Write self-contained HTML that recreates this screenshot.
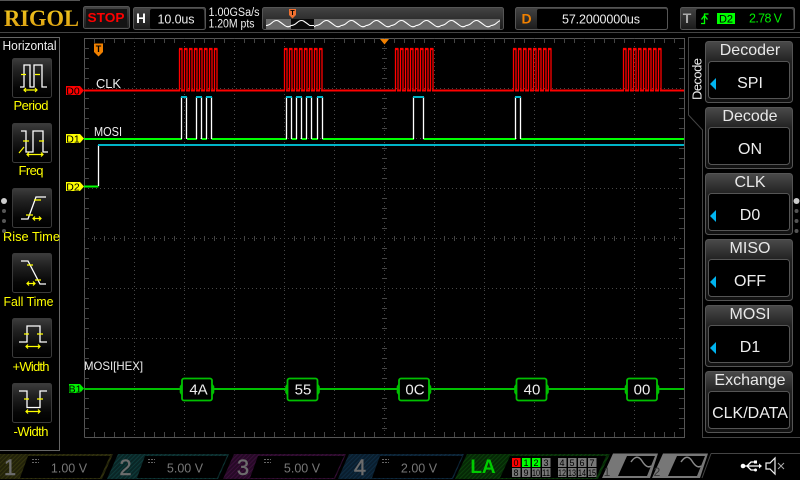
<!DOCTYPE html>
<html><head><meta charset="utf-8"><style>
html,body{margin:0;padding:0;background:#000;width:800px;height:480px;overflow:hidden}
svg{display:block}
text{font-family:"Liberation Sans",sans-serif;fill:#eee}
.l{font-size:13px;fill:#ff0;text-anchor:middle}
.m{font-size:16px;text-anchor:middle;fill:#e8e8e8}
.s{font-size:16px;text-anchor:middle;fill:#eee}
.v{font-size:12.5px;fill:#777;text-anchor:middle}
.n{font-size:22px;fill:#6c6c6c;text-anchor:middle;stroke:#6c6c6c;stroke-width:.4px}
.d{font-size:9px;fill:#000;text-anchor:middle}
.w{fill:none;stroke:#fff;stroke-width:1.3}
.y{fill:none;stroke:#ff0;stroke-width:1.2}
.hx{font-size:15px;text-anchor:middle}
.tg{font-size:10.5px;fill:#000;text-anchor:middle}
</style></head><body>
<svg width="800" height="480" viewBox="0 0 800 480" xmlns="http://www.w3.org/2000/svg">
<defs>
<linearGradient id="b" x1="0" y1="0" x2="0" y2="1"><stop offset="0" stop-color="#3c3c3c"/><stop offset=".3" stop-color="#222"/><stop offset=".75" stop-color="#060606"/><stop offset="1" stop-color="#000"/></linearGradient>
<linearGradient id="mh" x1="0" y1="0" x2="0" y2="1"><stop offset="0" stop-color="#4a4a4a"/><stop offset=".33" stop-color="#222"/><stop offset="1" stop-color="#111"/></linearGradient>
<linearGradient id="hb" x1="0" y1="0" x2="0" y2="1"><stop offset="0" stop-color="#444"/><stop offset="1" stop-color="#1a1a1a"/></linearGradient>
<linearGradient id="gd" x1="0" y1="0" x2="0" y2="1"><stop offset="0" stop-color="#f4cc20"/><stop offset="1" stop-color="#d89a10"/></linearGradient>
<pattern id="h1" width="3" height="3" patternUnits="userSpaceOnUse" patternTransform="rotate(45)"><rect width="3" height="3" fill="#22220a"/><rect width="1" height="3" fill="#34340e"/></pattern>
<pattern id="h2" width="3" height="3" patternUnits="userSpaceOnUse" patternTransform="rotate(45)"><rect width="3" height="3" fill="#0a2626"/><rect width="1" height="3" fill="#0e3a3a"/></pattern>
<pattern id="h3" width="3" height="3" patternUnits="userSpaceOnUse" patternTransform="rotate(45)"><rect width="3" height="3" fill="#260a26"/><rect width="1" height="3" fill="#3a0e3a"/></pattern>
<pattern id="h4" width="3" height="3" patternUnits="userSpaceOnUse" patternTransform="rotate(45)"><rect width="3" height="3" fill="#0a1e2e"/><rect width="1" height="3" fill="#0e2c42"/></pattern>
<pattern id="h5" width="3" height="3" patternUnits="userSpaceOnUse" patternTransform="rotate(45)"><rect width="3" height="3" fill="#062806"/><rect width="1" height="3" fill="#0b400b"/></pattern>
<pattern id="sw" x="266" y="19" width="25" height="10" patternUnits="userSpaceOnUse"><path d="M0 6.500Q3 6.500 6.250 3.500T12.500 2Q15.500 4 18.750 6.500T25 6.500" fill="none" stroke="#fff" stroke-width="1.100"/></pattern>
<g id="burst" fill="none" stroke="#f00" stroke-width="1.300"><path d="M.5 42V.5H3V42M5.500 42V.5H8V42M10.500 42V.5H13V42M15.500 42V.5H18V42M20.500 42V.5H23V42M25.500 42V.5H28V42M30.500 42V.5H33V42M35.500 42V.5H38V42"/><path d="M0 -.5H3.500M5 -.5H8.500M10 -.5H13.500M15 -.5H18.500M20 -.5H23.500M25 -.5H28.500M30 -.5H33.500M35 -.5H38.500"/></g>
<g id="hexb"><rect x="2" y="-11" width="30" height="22" rx="2" fill="#000" stroke="#00c000" stroke-width="1.800"/><path d="M2 -6L0 -3V3L2 6ZM32 -6L34 -3V3L32 6Z" fill="#00c000" stroke="#00c000" stroke-width=".6"/></g>
</defs>
<rect width="800" height="480" fill="#000"/>
<path d="M0 0.500H80" stroke="#555"/>
<!-- header -->
<text x="4" y="26" style="font-family:'Liberation Serif',serif;font-weight:bold;font-size:23px;fill:url(#gd)" textLength="75" lengthAdjust="spacingAndGlyphs">RIGOL</text>
<rect x="83.500" y="6.500" width="46" height="22" rx="2" fill="url(#hb)" stroke="#555"/>
<rect x="86" y="9" width="41" height="18" fill="#141414"/>
<text x="106" y="22" style="font-size:13px;font-weight:bold;fill:#f00;text-anchor:middle" textLength="37" lengthAdjust="spacingAndGlyphs">STOP</text>
<rect x="133.500" y="7.500" width="72" height="22" rx="2" fill="url(#hb)" stroke="#555"/>
<rect x="150" y="9" width="54" height="20" rx="2" fill="#000"/>
<text x="141" y="23" style="font-size:13.500px;font-weight:bold;text-anchor:middle;fill:#fff">H</text>
<text x="176" y="23.500" style="font-size:12.500px;text-anchor:middle" textLength="37" lengthAdjust="spacing">10.0us</text>
<text x="208.500" y="16" style="font-size:11.500px" textLength="51" lengthAdjust="spacingAndGlyphs">1.00GSa/s</text>
<text x="208.500" y="27.500" style="font-size:11.500px" textLength="46" lengthAdjust="spacingAndGlyphs">1.20M pts</text>
<rect x="262.500" y="7.500" width="241" height="22" rx="2" fill="url(#hb)" stroke="#555"/>
<rect x="266" y="19" width="234" height="10" fill="#6a6a6a"/>
<rect x="266" y="19" width="234" height="10" fill="url(#sw)"/>
<rect x="291" y="19" width="23" height="10" fill="#0a0a0a"/>
<path d="M291 25.500Q294 25.500 297.250 22.500T303.500 21Q306.500 23 309.750 25.500L314 25.500" fill="none" stroke="#fff" stroke-width="1.100"/>
<path d="M289 9H296V15L292.500 18.500L289 15Z" fill="#f07030"/>
<text x="292.500" y="15" style="font-size:7px;font-weight:bold;text-anchor:middle;fill:#000">T</text>
<rect x="515.500" y="7.500" width="152" height="22" rx="2" fill="url(#hb)" stroke="#555"/>
<rect x="537" y="9" width="130" height="20" rx="2" fill="#000"/>
<text x="526.500" y="23.500" style="font-size:14px;font-weight:bold;fill:#f08000;text-anchor:middle">D</text>
<text x="601" y="23.500" style="font-size:12.500px;text-anchor:middle" textLength="78" lengthAdjust="spacing">57.2000000us</text>
<rect x="680.500" y="7.500" width="114" height="22" rx="2" fill="url(#hb)" stroke="#555"/>
<rect x="696" y="9" width="97" height="20" rx="2" fill="#000"/>
<text x="687" y="23" style="font-size:14px;font-weight:bold;fill:#aaa;text-anchor:middle">T</text>
<path d="M701 23.500H704.500V14H708.500M701.500 19.500L704.500 15.500L707.500 19.500" fill="none" stroke="#0f0" stroke-width="1.300"/>
<rect x="717" y="13" width="18" height="11" fill="#0f0"/>
<text x="726" y="22.500" style="font-size:11px;fill:#000;text-anchor:middle">D2</text>
<text x="749" y="22.700" style="font-size:12.500px;fill:#0e0" textLength="33" lengthAdjust="spacing">2.78 V</text>
<path d="M0 32.500H800" stroke="#444"/>

<!-- grid -->
<path d="M84.500 437.500V38.500H684.500V437.500H84.500" fill="none" stroke="#555"/>
<g stroke="#484848" stroke-dasharray="1 3" fill="none">
<path d="M134.500 38V437M184.500 38V437M234.500 38V437M284.500 38V437M334.500 38V437M434.500 38V437M484.500 38V437M534.500 38V437M584.500 38V437M634.500 38V437"/>
<path d="M84 88.500H684M84 138.500H684M84 188.500H684M84 288.500H684M84 338.500H684M84 388.500H684"/>
</g>
<g stroke="#444" fill="none">
<path d="M84 238.500H684"  stroke-dasharray="1 3"/>
<path d="M384.500 38V437" stroke-dasharray="1 3"/>
<path d="M94.500 38v5M104.500 38v5M114.500 38v5M124.500 38v5M144.500 38v5M154.500 38v5M164.500 38v5M174.500 38v5M194.500 38v5M204.500 38v5M214.500 38v5M224.500 38v5M244.500 38v5M254.500 38v5M264.500 38v5M274.500 38v5M294.500 38v5M304.500 38v5M314.500 38v5M324.500 38v5M344.500 38v5M354.500 38v5M364.500 38v5M374.500 38v5M394.500 38v5M404.500 38v5M414.500 38v5M424.500 38v5M444.500 38v5M454.500 38v5M464.500 38v5M474.500 38v5M494.500 38v5M504.500 38v5M514.500 38v5M524.500 38v5M544.500 38v5M554.500 38v5M564.500 38v5M574.500 38v5M594.500 38v5M604.500 38v5M614.500 38v5M624.500 38v5M644.500 38v5M654.500 38v5M664.500 38v5M674.500 38v5"/>
<path d="M94.500 437v-5M104.500 437v-5M114.500 437v-5M124.500 437v-5M144.500 437v-5M154.500 437v-5M164.500 437v-5M174.500 437v-5M194.500 437v-5M204.500 437v-5M214.500 437v-5M224.500 437v-5M244.500 437v-5M254.500 437v-5M264.500 437v-5M274.500 437v-5M294.500 437v-5M304.500 437v-5M314.500 437v-5M324.500 437v-5M344.500 437v-5M354.500 437v-5M364.500 437v-5M374.500 437v-5M394.500 437v-5M404.500 437v-5M414.500 437v-5M424.500 437v-5M444.500 437v-5M454.500 437v-5M464.500 437v-5M474.500 437v-5M494.500 437v-5M504.500 437v-5M514.500 437v-5M524.500 437v-5M544.500 437v-5M554.500 437v-5M564.500 437v-5M574.500 437v-5M594.500 437v-5M604.500 437v-5M614.500 437v-5M624.500 437v-5M644.500 437v-5M654.500 437v-5M664.500 437v-5M674.500 437v-5"/>
<path d="M84 48.500h5M84 58.500h5M84 68.500h5M84 78.500h5M84 98.500h5M84 108.500h5M84 118.500h5M84 128.500h5M84 148.500h5M84 158.500h5M84 168.500h5M84 178.500h5M84 198.500h5M84 208.500h5M84 218.500h5M84 228.500h5M84 248.500h5M84 258.500h5M84 268.500h5M84 278.500h5M84 298.500h5M84 308.500h5M84 318.500h5M84 328.500h5M84 348.500h5M84 358.500h5M84 368.500h5M84 378.500h5M84 398.500h5M84 408.500h5M84 418.500h5M84 428.500h5"/>
<path d="M684 48.500h-5M684 58.500h-5M684 68.500h-5M684 78.500h-5M684 98.500h-5M684 108.500h-5M684 118.500h-5M684 128.500h-5M684 148.500h-5M684 158.500h-5M684 168.500h-5M684 178.500h-5M684 198.500h-5M684 208.500h-5M684 218.500h-5M684 228.500h-5M684 248.500h-5M684 258.500h-5M684 268.500h-5M684 278.500h-5M684 298.500h-5M684 308.500h-5M684 318.500h-5M684 328.500h-5M684 348.500h-5M684 358.500h-5M684 368.500h-5M684 378.500h-5M684 398.500h-5M684 408.500h-5M684 418.500h-5M684 428.500h-5"/>
<path d="M382 48.500h5M382 58.500h5M382 68.500h5M382 78.500h5M382 98.500h5M382 108.500h5M382 118.500h5M382 128.500h5M382 148.500h5M382 158.500h5M382 168.500h5M382 178.500h5M382 198.500h5M382 208.500h5M382 218.500h5M382 228.500h5M382 248.500h5M382 258.500h5M382 268.500h5M382 278.500h5M382 298.500h5M382 308.500h5M382 318.500h5M382 328.500h5M382 348.500h5M382 358.500h5M382 368.500h5M382 378.500h5M382 398.500h5M382 408.500h5M382 418.500h5M382 428.500h5"/>
<path d="M94.500 236v5M104.500 236v5M114.500 236v5M124.500 236v5M144.500 236v5M154.500 236v5M164.500 236v5M174.500 236v5M194.500 236v5M204.500 236v5M214.500 236v5M224.500 236v5M244.500 236v5M254.500 236v5M264.500 236v5M274.500 236v5M294.500 236v5M304.500 236v5M314.500 236v5M324.500 236v5M344.500 236v5M354.500 236v5M364.500 236v5M374.500 236v5M394.500 236v5M404.500 236v5M414.500 236v5M424.500 236v5M444.500 236v5M454.500 236v5M464.500 236v5M474.500 236v5M494.500 236v5M504.500 236v5M514.500 236v5M524.500 236v5M544.500 236v5M554.500 236v5M564.500 236v5M574.500 236v5M594.500 236v5M604.500 236v5M614.500 236v5M624.500 236v5M644.500 236v5M654.500 236v5M664.500 236v5M674.500 236v5"/>
</g>
<path d="M380 39H389L384.500 44.500Z" fill="#f08000"/>
<path d="M94 43.500H103V52L98.500 56.500L94 52Z" fill="#f08000"/>
<text x="98.500" y="52" style="font-size:9px;font-weight:bold;text-anchor:middle;fill:#000">T</text>

<!-- CLK -->
<g transform="translate(0,49)">
<use href="#burst" x="179"/><use href="#burst" x="284"/><use href="#burst" x="395"/><use href="#burst" x="513"/><use href="#burst" x="623"/>
</g>
<path d="M84 90.500H180M181 90.500H185M186 90.500H190M191 90.500H195M196 90.500H200M201 90.500H205M206 90.500H210M211 90.500H215M216 90.500H285M286 90.500H290M291 90.500H295M296 90.500H300M301 90.500H305M306 90.500H310M311 90.500H315M316 90.500H320M321 90.500H396M397 90.500H401M402 90.500H406M407 90.500H411M412 90.500H416M417 90.500H421M422 90.500H426M427 90.500H431M432 90.500H514M515 90.500H519M520 90.500H524M525 90.500H529M530 90.500H534M535 90.500H539M540 90.500H544M545 90.500H549M550 90.500H624M625 90.500H629M630 90.500H634M635 90.500H639M640 90.500H644M645 90.500H649M650 90.500H654M655 90.500H659M660 90.500H684" stroke="#f00" stroke-width="2" fill="none"/>

<!-- MOSI -->
<path d="M84 139H182M187 139H197M201.500 139H207M211.500 139H287M291.500 139H297M301.500 139H307M311.500 139H318M322.500 139H414M423.500 139H516M520.500 139H684" stroke="#0f0" stroke-width="2" fill="none"/>
<path d="M181.500 139V97M186.500 97V139M196.500 139V97M201.500 97V139M206.500 139V97M211.500 97V139M286.500 139V97M291.500 97V139M296.500 139V97M301.500 97V139M306.500 139V97M311.500 97V139M317.500 139V97M322.500 97V139M413.500 139V97M423.500 97V139M515.500 139V97M520.500 97V139" stroke="#fff" stroke-width="1.300" fill="none"/>
<path d="M181 97H187M196 97H202M206 97H212M286 97H292M296 97H302M306 97H312M317 97H323M413 97H424M515 97H521" stroke="#00b4c8" stroke-width="2" fill="none"/>
<!-- D2 -->
<path d="M84 186.500H98.500" stroke="#0f0" stroke-width="2"/>
<path d="M98.500 186V145" stroke="#fff" stroke-width="1.300"/>
<path d="M98 145H684" stroke="#00b4c8" stroke-width="2"/>

<text x="96" y="88" style="font-size:12.500px" textLength="25" lengthAdjust="spacingAndGlyphs">CLK</text>
<text x="94" y="136" style="font-size:12.500px" textLength="28" lengthAdjust="spacingAndGlyphs">MOSI</text>
<text x="84" y="370" style="font-size:12px" textLength="59" lengthAdjust="spacingAndGlyphs">MOSI[HEX]</text>

<!-- tags -->
<path d="M66 86H80L84 90.500L80 95H66Z" fill="#f00"/><text class="tg" x="73" y="94.500">D0</text>
<path d="M66 134H80L84 138.500L80 143H66Z" fill="#ff0"/><text class="tg" x="73" y="142.500">D1</text>
<path d="M66 182H80L84 186.500L80 191H66Z" fill="#ff0"/><text class="tg" x="73" y="190.500">D2</text>
<path d="M69 384H80L84 388.500L80 393H69Z" fill="#0e0"/><text class="tg" x="75" y="392.500">B1</text>

<!-- bus -->
<path d="M84 389H684" stroke="#00c000" stroke-width="2"/>
<use href="#hexb" x="180" y="389.500"/><text class="hx" x="198.500" y="394.500">4A</text>
<use href="#hexb" x="285.500" y="389.500"/><text class="hx" x="303" y="394.500">55</text>
<use href="#hexb" x="397" y="389.500"/><text class="hx" x="415" y="394.500">0C</text>
<use href="#hexb" x="514.500" y="389.500"/><text class="hx" x="532" y="394.500">40</text>
<use href="#hexb" x="625" y="389.500"/><text class="hx" x="642" y="394.500">00</text>

<!-- left panel -->
<path d="M0 37.500H59.500V450.500H0" fill="none" stroke="#666"/>
<text x="29.500" y="50" style="font-size:12.500px;text-anchor:middle" textLength="54" lengthAdjust="spacingAndGlyphs">Horizontal</text>
<g fill="url(#b)" stroke="#3a3a3a">
<rect x="12.500" y="58.500" width="39" height="39" rx="2"/>
<rect x="12.500" y="123.500" width="39" height="39" rx="2"/>
<rect x="12.500" y="188.500" width="39" height="39" rx="2"/>
<rect x="12.500" y="253.500" width="39" height="39" rx="2"/>
<rect x="12.500" y="318.500" width="39" height="39" rx="2"/>
<rect x="12.500" y="383.500" width="39" height="39" rx="2"/>
</g>
<path class="w" d="M20 87H24V65H30V87H34V65H42V87H47"/>
<path class="y" d="M21 74.500H26M35 74.500H40M24 90H37M26 88L24 90L26 92M35 88L37 90L35 92"/>
<path class="w" d="M21 131H26V152H33V131H43V152H48"/>
<path class="y" d="M23 141H29M39 141H44M27 154.500H43M29 152.500L27 154.500L29 156.500M41 152.500L43 154.500L41 156.500M19 153L24 147"/>
<path class="w" d="M21 219H28L36 197H46"/>
<path class="y" d="M26 215H33M34 200H41M33 218.500H41M35 216.500L33 218.500L35 220.500M39 216.500L41 218.500L39 220.500"/>
<path class="w" d="M21 261H28L40 284H46"/>
<path class="y" d="M27 265H33M35 280H41M27 283.500H35M29 281.500L27 283.500L29 285.500M33 281.500L35 283.500L33 285.500"/>
<path class="w" d="M19 342H27V326H40V342H47"/>
<path class="y" d="M24 334H29M37 334H43M26 346.500H40M28 344.500L26 346.500L28 348.500M38 344.500L40 346.500L38 348.500"/>
<path class="w" d="M19 391H27V407.500H40V391H47"/>
<path class="y" d="M24 399H29M37 399H43M26 411.500H40M28 409.500L26 411.500L28 413.500M38 409.500L40 411.500L38 413.500"/>
<text class="l" x="31" y="110" textLength="35" lengthAdjust="spacing">Period</text>
<text class="l" x="31" y="175" textLength="25" lengthAdjust="spacing">Freq</text>
<text class="l" x="31.500" y="241" textLength="57" lengthAdjust="spacingAndGlyphs">Rise Time</text>
<text class="l" x="28.500" y="306" textLength="50" lengthAdjust="spacingAndGlyphs">Fall Time</text>
<text class="l" x="31" y="371" textLength="37" lengthAdjust="spacing">+Width</text>
<text class="l" x="31" y="436" textLength="35" lengthAdjust="spacing">-Width</text>
<circle cx="4" cy="201" r="3" fill="#ccc"/><circle cx="4" cy="211" r="2" fill="#555"/><circle cx="4" cy="221" r="2" fill="#555"/><circle cx="4" cy="231" r="2" fill="#555"/>

<!-- right panel -->
<path d="M800 37.500H688.500V115L702.500 130V437.500H800" fill="none" stroke="#444"/>
<text transform="translate(701.500,79) rotate(-90)" style="font-size:13px;text-anchor:middle" textLength="42" lengthAdjust="spacing">Decode</text>
<g stroke="#555" fill="#000">
<rect x="705.500" y="41.500" width="87" height="61" rx="3" fill="url(#mh)"/><rect x="708.500" y="61.500" width="81" height="37" rx="3"/>
<rect x="705.500" y="107.500" width="87" height="61" rx="3" fill="url(#mh)"/><rect x="708.500" y="127.500" width="81" height="37" rx="3"/>
<rect x="705.500" y="173.500" width="87" height="61" rx="3" fill="url(#mh)"/><rect x="708.500" y="193.500" width="81" height="37" rx="3"/>
<rect x="705.500" y="239.500" width="87" height="61" rx="3" fill="url(#mh)"/><rect x="708.500" y="259.500" width="81" height="37" rx="3"/>
<rect x="705.500" y="305.500" width="87" height="61" rx="3" fill="url(#mh)"/><rect x="708.500" y="325.500" width="81" height="37" rx="3"/>
<rect x="705.500" y="371.500" width="87" height="61" rx="3" fill="url(#mh)"/><rect x="708.500" y="391.500" width="81" height="37" rx="3"/>
</g>
<text class="m" x="750" y="55">Decoder</text><text class="s" x="750" y="88">SPI</text>
<text class="m" x="750" y="121">Decode</text><text class="s" x="750" y="154">ON</text>
<text class="m" x="750" y="187">CLK</text><text class="s" x="750" y="220">D0</text>
<text class="m" x="750" y="253">MISO</text><text class="s" x="750" y="286">OFF</text>
<text class="m" x="750" y="319">MOSI</text><text class="s" x="750" y="352">D1</text>
<text class="m" x="750" y="385">Exchange</text><text class="s" x="750" y="418">CLK/DATA</text>
<g fill="#00b4f0">
<path d="M710 84L716 78V90Z"/><path d="M710 216L716 210V222Z"/><path d="M710 282L716 276V288Z"/><path d="M710 348L716 342V354Z"/>
</g>
<circle cx="796.500" cy="201" r="3" fill="#ccc"/><circle cx="796.500" cy="211" r="2" fill="#555"/><circle cx="796.500" cy="221" r="2" fill="#555"/><circle cx="796.500" cy="231" r="2" fill="#555"/>

<!-- bottom -->
<path d="M0 454H113L102 479H0Z" fill="url(#h1)"/>
<path d="M28 456H110L100 478H20Z" fill="#000"/>
<text class="n" x="10" y="475">1</text>
<path d="M32 459.500H39M32 462.500H39" stroke="#666" stroke-dasharray="2 1"/>
<text class="v" x="69" y="472.500">1.00 V</text>
<path d="M118 454H229L218 479H107Z" fill="url(#h2)"/>
<path d="M145 456H227L217 478H137Z" fill="#000"/>
<text class="n" x="125.500" y="475">2</text>
<path d="M148 459.500H155M148 462.500H155" stroke="#666" stroke-dasharray="2 1"/>
<text class="v" x="185" y="472.500">5.00 V</text>
<path d="M234 454H346L335 479H223Z" fill="url(#h3)"/>
<path d="M258 456H344L334 478H250Z" fill="#000"/>
<text class="n" x="243" y="475">3</text>
<path d="M264 459.500H271M264 462.500H271" stroke="#666" stroke-dasharray="2 1"/>
<text class="v" x="302" y="472.500">5.00 V</text>
<path d="M349 454H464L453 479H338Z" fill="url(#h4)"/>
<path d="M380 456H462L452 478H372Z" fill="#000"/>
<text class="n" x="360" y="475">4</text>
<path d="M382 459.500H389M382 462.500H389" stroke="#666" stroke-dasharray="2 1"/>
<text class="v" x="419" y="472.500">2.00 V</text>
<path d="M467 454H610L598 479H455Z" fill="url(#h5)"/>
<path d="M510 456H606L596 478H500Z" fill="#000"/>
<text x="483" y="473" style="font-size:19px;font-weight:bold;fill:#0c0;text-anchor:middle">LA</text>
<g fill="#777">
<rect x="512" y="458" width="8.500" height="9" fill="#f00"/><rect x="522" y="458" width="8.500" height="9" fill="#0f0"/><rect x="532" y="458" width="8.500" height="9" fill="#0f0"/><rect x="542" y="458" width="8.500" height="9"/>
<rect x="558" y="458" width="8.500" height="9"/><rect x="568" y="458" width="8.500" height="9"/><rect x="578" y="458" width="8.500" height="9"/><rect x="588" y="458" width="8.500" height="9"/>
<rect x="512" y="468" width="8.500" height="9"/><rect x="522" y="468" width="8.500" height="9"/><rect x="532" y="468" width="8.500" height="9"/><rect x="542" y="468" width="8.500" height="9"/>
<rect x="558" y="468" width="8.500" height="9"/><rect x="568" y="468" width="8.500" height="9"/><rect x="578" y="468" width="8.500" height="9"/><rect x="588" y="468" width="8.500" height="9"/>
</g>
<text class="d" x="516" y="466">0</text><text class="d" x="526" y="466">1</text><text class="d" x="536" y="466">2</text><text class="d" x="546" y="466">3</text><text class="d" x="562" y="466">4</text><text class="d" x="572" y="466">5</text><text class="d" x="582" y="466">6</text><text class="d" x="592" y="466">7</text>
<text class="d" x="516" y="476">8</text><text class="d" x="526" y="476">9</text><text class="d" x="536" y="476" textLength="8" lengthAdjust="spacingAndGlyphs">10</text><text class="d" x="546" y="476" textLength="8" lengthAdjust="spacingAndGlyphs">11</text><text class="d" x="562" y="476" textLength="8" lengthAdjust="spacingAndGlyphs">12</text><text class="d" x="572" y="476" textLength="8" lengthAdjust="spacingAndGlyphs">13</text><text class="d" x="582" y="476" textLength="8" lengthAdjust="spacingAndGlyphs">14</text><text class="d" x="592" y="476" textLength="8" lengthAdjust="spacingAndGlyphs">15</text>
<path d="M613 453.500H658L650 478H602Z" fill="#777"/>
<path d="M627 456H655L647 476H618Z" fill="#000"/>
<text x="607" y="476" style="font-size:12px;fill:#333;text-anchor:middle">1</text>
<path d="M631 462Q637 453 642 461T651 466" fill="none" stroke="#888" stroke-width="1.500"/>
<path d="M663 453.500H708L700 478H652Z" fill="#777"/>
<path d="M677 456H705L697 476H668Z" fill="#000"/>
<text x="657" y="476" style="font-size:12px;fill:#333;text-anchor:middle">2</text>
<path d="M681 462Q687 453 692 461T701 466" fill="none" stroke="#888" stroke-width="1.500"/>
<path d="M711 453.500H800" stroke="#444"/>
<path d="M711 453.500L702 478" stroke="#444"/>
<!-- usb -->
<path d="M742 466H759M747 466L751 462H755M747 466L751 470H755" fill="none" stroke="#fff" stroke-width="1.300"/>
<circle cx="743" cy="466" r="2.300" fill="#fff"/><path d="M759 463.500L762 466L759 468.500Z" fill="#fff"/><rect x="754" y="460.500" width="3" height="3" fill="#fff"/><circle cx="755.500" cy="470" r="1.500" fill="#fff"/>
<!-- speaker -->
<path d="M766 463H770L775 458V474L770 469H766Z" fill="none" stroke="#eee" stroke-width="1.200"/>
<path d="M778 463L784 469M784 463L778 469" stroke="#aaa" stroke-width="1"/>
</svg>
</body></html>
